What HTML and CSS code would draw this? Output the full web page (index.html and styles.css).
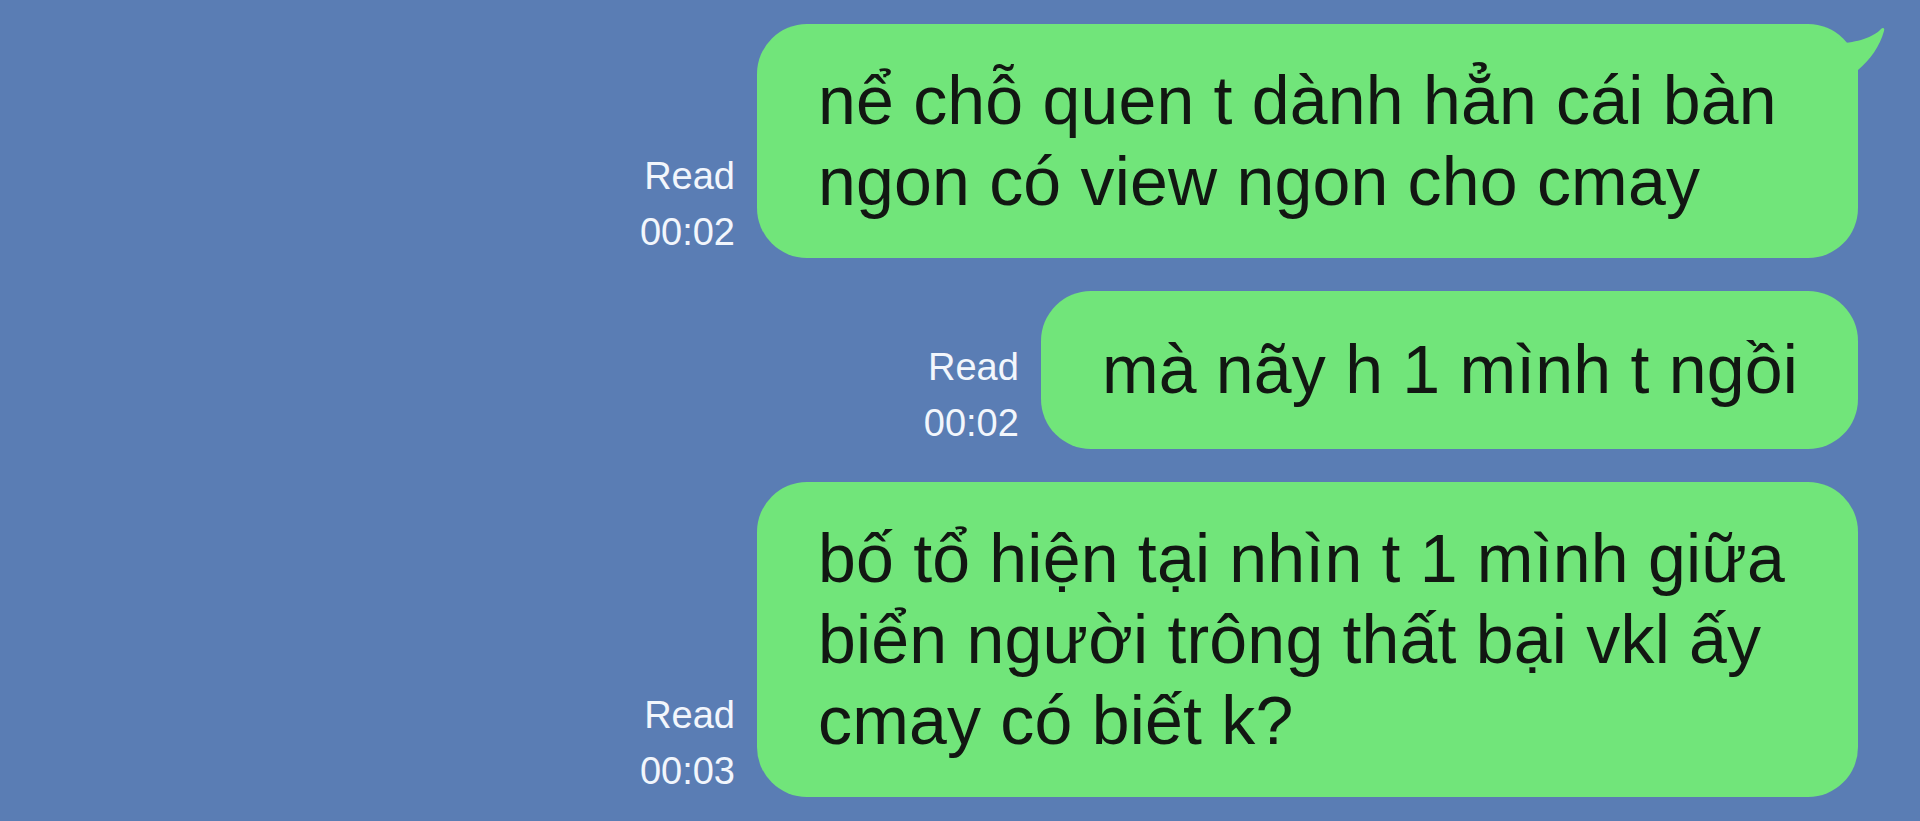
FILE: index.html
```html
<!DOCTYPE html>
<html lang="vi">

<head>
  <meta charset="UTF-8" />
  <meta name="viewport" content="width=device-width, initial-scale=1.0" />
  <title>Chat</title>
  <link rel="stylesheet" href="styles.css">
</head>

<body>
  <div id="chat">
    <div class="linha">
      <div class="lido">Read<br>00:02</div>
      <div class="balao primeiro">
        nể chỗ quen t dành hẳn cái bàn ngon có view ngon cho cmay
        <svg class="rabo" viewBox="0 0 60 70" width="60" height="70">
          <path d="M0 8 L12 19 C28 19 46 13 53 5 C55 3 57 4 56 7 C52 22 42 36 30 46 L30 70 L0 70 Z" />
        </svg>
      </div>
    </div>
    <div class="linha">
      <div class="lido">Read<br>00:02</div>
      <div class="balao curto">mà nãy h 1 mình t ngồi</div>
    </div>
    <div class="linha">
      <div class="lido">Read<br>00:03</div>
      <div class="balao">bố tổ hiện tại nhìn t 1 mình giữa biển người trông thất bại vkl ấy cmay có biết k?</div>
    </div>
  </div>
</body>

</html>
```

FILE: styles.css
```css
body {
  margin: 0;
  font-family: 'Liberation Sans', Arial, sans-serif;
  background-color: #5a7db4;
  height: 100vh;
  overflow: hidden;
}

#chat {
  display: flex;
  flex-direction: column;
  gap: 33px;
  padding: 24px 62px 0 0;
}

.linha {
  display: flex;
  justify-content: flex-end;
  align-items: flex-end;
  gap: 22px;
}

.lido {
  color: #f2f6fc;
  font-size: 38px;
  line-height: 56px;
  text-align: right;
  margin-bottom: -2px;
}

.balao {
  position: relative;
  max-width: 1101px;
  box-sizing: border-box;
  background-color: #71e57a;
  color: #121712;
  font-size: 68px;
  letter-spacing: 0.2px;
  line-height: 81px;
  padding: 36px 60px 36px 61px;
  border-radius: 50px;
}

.curto {
  padding-top: 38px;
  padding-bottom: 39px;
}

.rabo {
  position: absolute;
  top: 0;
  right: -30px;
  fill: #71e57a;
}
```
